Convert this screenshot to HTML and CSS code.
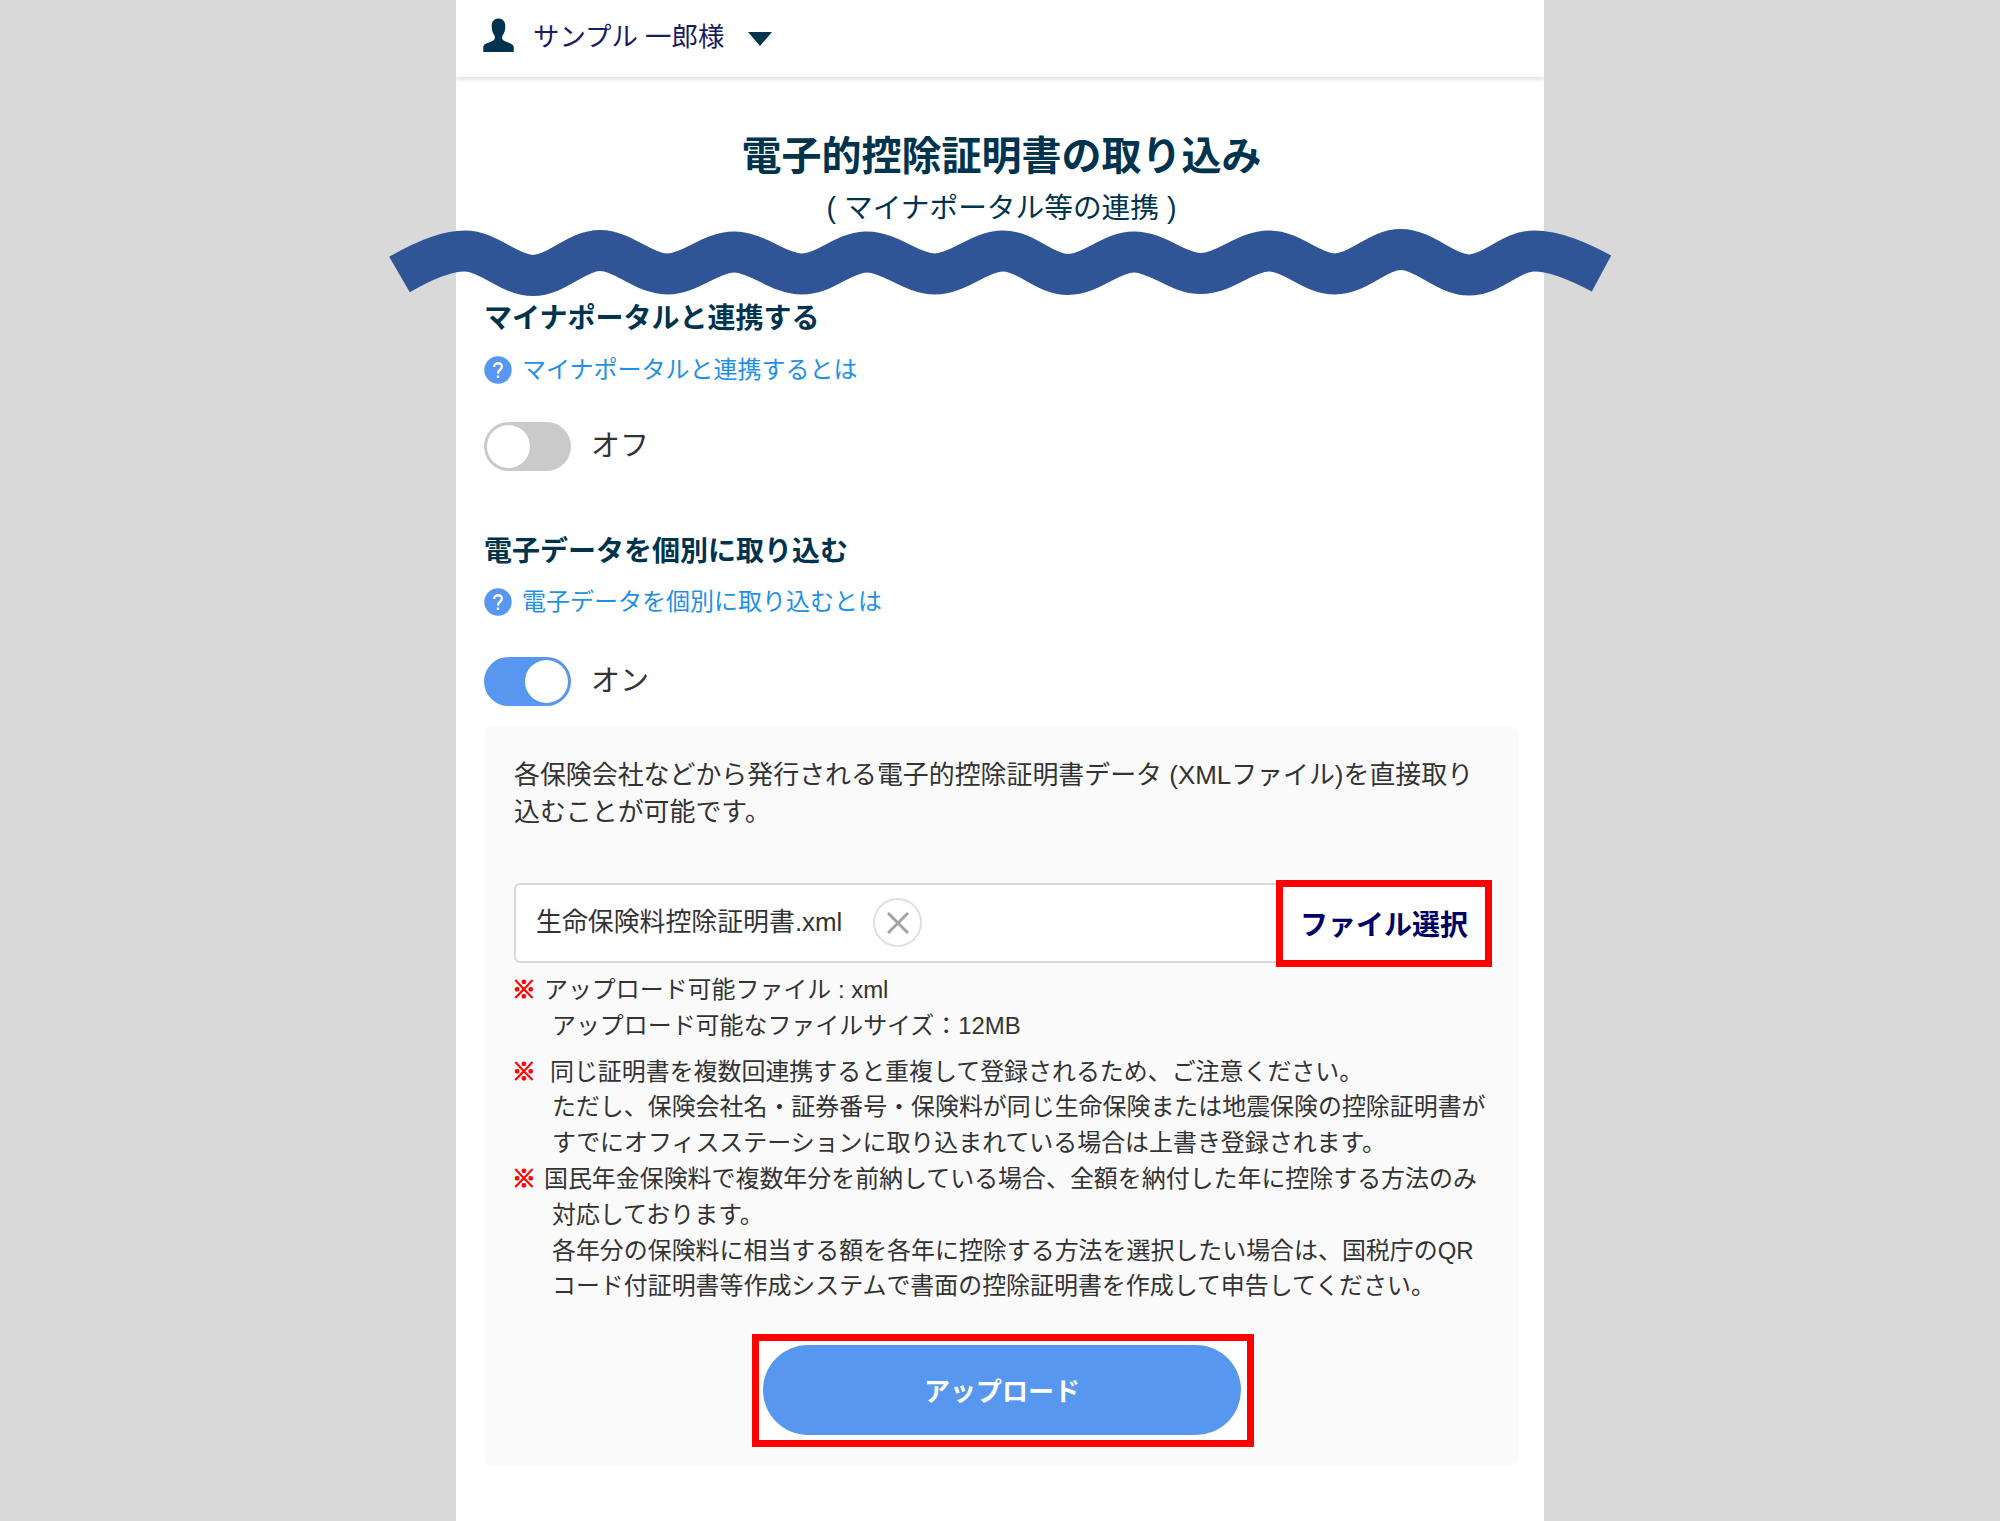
FILE: index.html
```html
<!DOCTYPE html>
<html lang="ja">
<head>
    <meta charset="UTF-8">
    <title>電子的控除証明書の取り込み</title>
    <link rel="stylesheet" href="styles.css">
</head>
<body>
    <div class="page">
        <header class="header">
            <svg class="user-icon" width="31" height="34" viewBox="0 0 31 34">
                <path d="M15.5 0.5C11 0.5 8.7 3.8 8.7 8c0 4 .8 7 2.8 9.500c.6 2 .5 3.500-.5 4.500C8 24.500 1 25 .3 28.500V34h30.400v-5.500C30 25 23 24.500 20 22c-1-1-1.100-2.500-.5-4.500c2-2.500 2.800-5.500 2.800-9.500C22.300 3.800 20 .5 15.500 .5z"/>
            </svg>
            <span class="user-name">サンプル 一郎様</span>
            <span class="arrow"></span>
        </header>

        <h1>電子的控除証明書の取り込み</h1>
        <p class="subtitle">( マイナポータル等の連携 )</p>

        <!-- 省略を表す波線 -->
        <svg class="wave" width="1230" height="80" viewBox="385 225 1230 80">
            <path d="M399.500 274.500C421 262 444 251 465 251C489 251 509 275.500 533 275.500S576 250.500 600 250.500S643 274 667 274S710 252 734 252S778 274 802 274S843 252 867 252S911 274 935 274S979 251 1003 251S1044 274.500 1068 274.500S1110 252 1134 252S1177 273.500 1201 273.500S1245 251 1269 251S1311 274 1335 274S1377 249.500 1401 249.500S1445 275 1469 275S1510 251 1534 251C1556 251 1580 262 1601.500 273.500"/>
        </svg>

        <section class="setting">
            <h2>マイナポータルと連携する</h2>
            <a class="help">
                <svg class="help-icon" width="28" height="28" viewBox="0 0 29 29">
                    <circle cx="14.5" cy="14.5" r="14.200"/>
                    <path d="M10.500 11.500c0-2.500 1.700-4 4-4s4 1.500 4 3.700c0 2.800-4 3.300-4 6.800M14.500 20.300v2.500"/>
                </svg>
                マイナポータルと連携するとは
            </a>
            <div class="switch-row">
                <span class="switch"></span>
                <span>オフ</span>
            </div>
        </section>

        <section class="setting second">
            <h2>電子データを個別に取り込む</h2>
            <a class="help">
                <svg class="help-icon" width="28" height="28" viewBox="0 0 29 29">
                    <circle cx="14.5" cy="14.5" r="14.200"/>
                    <path d="M10.500 11.500c0-2.500 1.700-4 4-4s4 1.500 4 3.700c0 2.800-4 3.300-4 6.800M14.500 20.300v2.500"/>
                </svg>
                電子データを個別に取り込むとは
            </a>
            <div class="switch-row">
                <span class="switch on"></span>
                <span>オン</span>
            </div>
        </section>

        <div class="upload-box">
            <p class="lead">各保険会社などから発行される電子的控除証明書データ (XMLファイル)を直接取り<br>込むことが可能です。</p>

            <div class="file-field">
                <span class="file-name">生命保険料控除証明書.xml</span>
                <span class="clear">
                    <svg width="22" height="22" viewBox="0 0 22 22"><path d="M1 1l20 20M21 1L1 21"/></svg>
                </span>
                <button class="select-button">ファイル選択</button>
            </div>

            <ul class="notes">
                <li><b>※</b>アップロード可能ファイル : xml<br>アップロード可能なファイルサイズ：12MB</li>
                <li class="wide"><b>※</b>同じ証明書を複数回連携すると重複して登録されるため、ご注意ください。<br>ただし、保険会社名・証券番号・保険料が同じ生命保険または地震保険の控除証明書が<br>すでにオフィスステーションに取り込まれている場合は上書き登録されます。</li>
                <li><b>※</b>国民年金保険料で複数年分を前納している場合、全額を納付した年に控除する方法のみ<br>対応しております。<br>各年分の保険料に相当する額を各年に控除する方法を選択したい場合は、国税庁のQR<br>コード付証明書等作成システムで書面の控除証明書を作成して申告してください。</li>
            </ul>

            <div class="submit-frame">
                <button class="submit-button">アップロード</button>
            </div>
        </div>
    </div>
</body>
</html>
```

FILE: styles.css
```css
* {
    box-sizing: border-box;
}

body {
    margin: 0;
    background-color: #d9d9d9;
    color: #333;
    font-family: "Liberation Sans", "Noto Sans CJK JP", sans-serif;
    font-size: 24px;
}

.page {
    position: relative;
    width: 1088px;
    height: 1521px;
    margin: 0 auto;
    background-color: #fff;
}

.header {
    display: flex;
    align-items: center;
    height: 77px;
    padding: 0 27px 3px;
    box-shadow: 0 1px 6px rgba(0, 0, 0, 0.2);
    clip-path: inset(0 0 -10px 0);
}

.user-icon {
    margin-top: -4px;
    fill: #00334d;
}

.user-name {
    margin-left: 19px;
    color: #1a1a66;
    font-size: 26.4px;
    line-height: 40px;
}

.arrow {
    margin: 4px 0 0 24px;
    border: 12px solid transparent;
    border-top: 14px solid #00334d;
    border-bottom: 0;
}

h1 {
    margin: 53px 0 0 3px;
    color: #00334d;
    font-size: 40px;
    line-height: 52px;
    text-align: center;
}

.subtitle {
    margin: 6px 0 0 3px;
    color: #00334d;
    font-size: 28.7px;
    line-height: 40px;
    text-align: center;
}

.wave {
    position: absolute;
    top: 225px;
    left: -71px;
    fill: none;
    stroke: #2f5597;
    stroke-width: 41px;
}

.setting {
    margin: 71px 28px 0;
}

.setting.second {
    margin-top: 61px;
}

h2 {
    margin: 0;
    color: #00334d;
    font-size: 28px;
    line-height: 40px;
}

.help {
    display: flex;
    align-items: center;
    gap: 10px;
    height: 30px;
    margin-top: 16px;
    color: #1e90e8;
    font-size: 24px;
    line-height: 30px;
}

.help-icon circle {
    fill: #5897f0;
}

.help-icon path {
    fill: none;
    stroke: #fff;
    stroke-width: 2.4px;
}

.second .help {
    margin-top: 15px;
}

.switch-row {
    display: flex;
    align-items: center;
    gap: 20px;
    margin-top: 37px;
    font-size: 29px;
    line-height: 49px;
}

.second .switch-row {
    margin-top: 40px;
}

.switch {
    width: 87px;
    height: 49px;
    padding: 3px;
    border-radius: 25px;
    background-color: #cacaca;
}

.switch::before {
    content: "";
    display: block;
    width: 43px;
    height: 43px;
    border-radius: 50%;
    background-color: #fff;
}

.switch.on {
    background-color: #5897f0;
}

.switch.on::before {
    margin-left: auto;
}

.upload-box {
    height: 738px;
    margin: 21px 26px 0 28px;
    padding: 30px 27px 0 30px;
    border-radius: 6px;
    background-color: #fafafa;
}

.lead {
    margin: 0;
    font-size: 25.93px;
    line-height: 37px;
    white-space: nowrap;
}

.file-field {
    display: flex;
    align-items: center;
    height: 80px;
    margin-top: 52px;
    padding-left: 20px;
    border: 2px solid #d9d9d9;
    border-radius: 6px;
    background-color: #fff;
}

.file-name {
    font-size: 25.9px;
    line-height: 40px;
    padding-bottom: 2px;
}

.clear {
    display: flex;
    align-items: center;
    justify-content: center;
    width: 49px;
    height: 49px;
    margin: 0 0 1px 31px;
    border: 2px solid #e0e0e0;
    border-radius: 50%;
}

.clear path {
    stroke: #a3a3a3;
    stroke-width: 3px;
}

.select-button {
    flex: none;
    width: 216px;
    height: 87px;
    margin: 0 -3px 0 auto;
    padding: 0;
    border: 7px solid #f00;
    background-color: #fff;
    color: #000066;
    font-family: inherit;
    font-size: 28px;
    font-weight: bold;
}

.notes {
    margin: 9px 0 0;
    padding: 0 0 0 38px;
    list-style: none;
    font-size: 23.94px;
    line-height: 35.8px;
    white-space: nowrap;
}

.notes li {
    text-indent: -40px;
}

.notes li b {
    display: inline-block;
    width: 32px;
    color: #f00;
    text-indent: 0;
    -webkit-text-stroke: 1px #f00;
}

.notes .wide {
    margin-top: 10px;
}

.notes .wide b {
    width: 38px;
}

.submit-frame {
    width: 502px;
    height: 113px;
    margin: 30px 0 0 238px;
    padding: 4px;
    border: 7px solid #f00;
    background-color: #fff;
}

.submit-button {
    width: 478px;
    height: 90px;
    padding-bottom: 2px;
    border: 0;
    border-radius: 45px;
    background-color: #5897f0;
    color: #fff;
    font-family: inherit;
    font-size: 26px;
    font-weight: bold;
}
```
